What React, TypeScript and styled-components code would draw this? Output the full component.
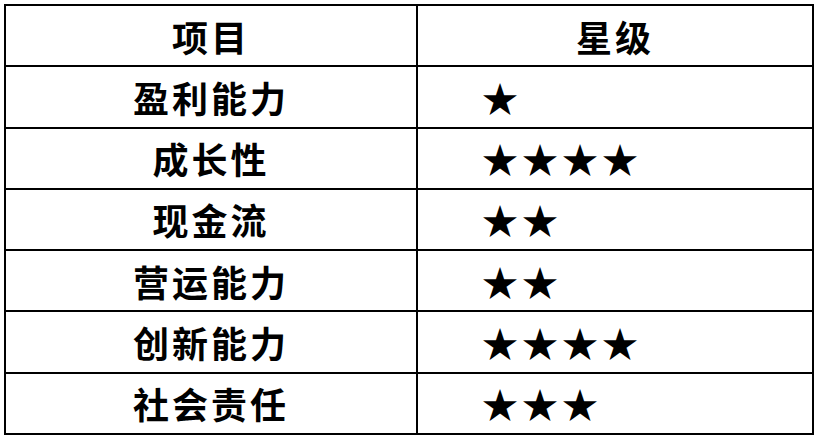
import React from "react";
import styled, { createGlobalStyle } from "styled-components";

const Global = createGlobalStyle`
  html, body { margin: 0; padding: 0; background: #ffffff; }
  body { font-family: "Noto Sans CJK SC", "Noto Sans", sans-serif; }
`;

const Page = styled.div`
  padding: 4px;
`;

const Table = styled.div`
  box-sizing: border-box;
  width: 810px;
  height: 431px;
  display: grid;
  grid-template-columns: 412px 396px;
  grid-template-rows: repeat(7, 1fr);
  border-top: 2px solid #000;
  border-left: 2px solid #000;
`;

const Cell = styled.div<{ $align?: "center" | "left" }>`
  box-sizing: border-box;
  border-right: 2px solid #000;
  border-bottom: 2px solid #000;
  display: flex;
  align-items: center;
  justify-content: ${(p) => (p.$align === "left" ? "flex-start" : "center")};
  padding-left: ${(p) => (p.$align === "left" ? "64px" : "0")};
  font-family: "Noto Sans CJK SC", sans-serif;
  font-weight: 700;
  font-size: 36px;
  letter-spacing: 3px;
  color: #000;
  line-height: 1;
`;

const Stars = styled.span`
  font-family: "Noto Sans CJK SC", sans-serif;
  font-size: 36px;
  letter-spacing: 4px;
  line-height: 1;
`;

const rows: [string, number][] = [
  ["盈利能力", 1],
  ["成长性", 4],
  ["现金流", 2],
  ["营运能力", 2],
  ["创新能力", 4],
  ["社会责任", 3],
];

export default function App() {
  return (
    <Page>
      <Global />
      <Table>
        <Cell>项目</Cell>
        <Cell>星级</Cell>
        {rows.map(([name, n]) => (
          <React.Fragment key={name}>
            <Cell>{name}</Cell>
            <Cell $align="left">
              <Stars>{"★".repeat(n)}</Stars>
            </Cell>
          </React.Fragment>
        ))}
      </Table>
    </Page>
  );
}
